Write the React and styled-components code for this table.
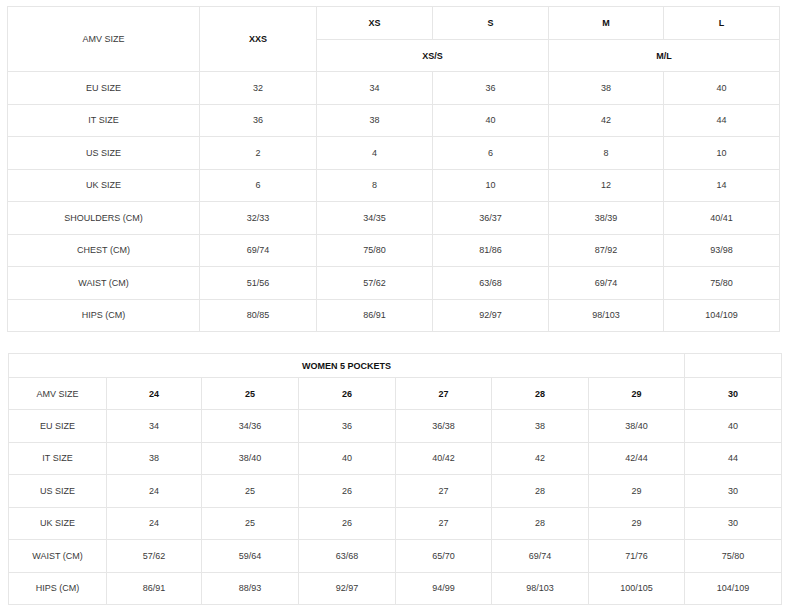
import React from 'react'
import styled, { createGlobalStyle } from 'styled-components'

const GlobalStyle = createGlobalStyle`
  html, body {
    margin: 0;
    padding: 0;
    background: #fff;
  }
  body {
    font-family: "Liberation Sans", Arial, sans-serif;
  }
`

const Page = styled.div`
  width: 800px;
  padding-top: 6px;
`

const Table = styled.table`
  border-collapse: collapse;
  table-layout: fixed;
  width: ${(p) => p.$width}px;
  margin-left: ${(p) => p.$left}px;
  margin-top: ${(p) => p.$top || 0}px;
  font-size: 9px;
`

const Row = styled.tr`
  height: ${(p) => p.$h || 32.5}px;
`

const Cell = styled.td`
  border: 1px solid #e6e6e6;
  text-align: center;
  vertical-align: middle;
  padding: 0;
  color: ${(p) => (p.$bold ? '#111' : '#3a3a3a')};
  font-weight: ${(p) => (p.$bold ? 700 : 400)};
  white-space: nowrap;
`

const first = {
  cols: [192, 117, 116, 116, 115, 116],
  rows: [
    ['EU SIZE', '32', '34', '36', '38', '40'],
    ['IT SIZE', '36', '38', '40', '42', '44'],
    ['US SIZE', '2', '4', '6', '8', '10'],
    ['UK SIZE', '6', '8', '10', '12', '14'],
    ['SHOULDERS (CM)', '32/33', '34/35', '36/37', '38/39', '40/41'],
    ['CHEST (CM)', '69/74', '75/80', '81/86', '87/92', '93/98'],
    ['WAIST (CM)', '51/56', '57/62', '63/68', '69/74', '75/80'],
    ['HIPS (CM)', '80/85', '86/91', '92/97', '98/103', '104/109'],
  ],
}

const second = {
  cols: [98, 95, 97, 97, 96, 97, 96, 97],
  head: ['24', '25', '26', '27', '28', '29', '30'],
  rows: [
    ['EU SIZE', '34', '34/36', '36', '36/38', '38', '38/40', '40'],
    ['IT SIZE', '38', '38/40', '40', '40/42', '42', '42/44', '44'],
    ['US SIZE', '24', '25', '26', '27', '28', '29', '30'],
    ['UK SIZE', '24', '25', '26', '27', '28', '29', '30'],
    ['WAIST (CM)', '57/62', '59/64', '63/68', '65/70', '69/74', '71/76', '75/80'],
    ['HIPS (CM)', '86/91', '88/93', '92/97', '94/99', '98/103', '100/105', '104/109'],
  ],
}

const Cols = ({ widths }) => (
  <colgroup>
    {widths.map((w, i) => (
      <col key={i} style={{ width: w }} />
    ))}
  </colgroup>
)

const DataRows = ({ rows }) =>
  rows.map((r) => (
    <Row key={r[0]}>
      {r.map((v, i) => (
        <Cell key={i}>{v}</Cell>
      ))}
    </Row>
  ))

const AmvTable = () => (
  <Table $width={772} $left={7}>
    <Cols widths={first.cols} />
    <tbody>
      <Row $h={33}>
        <Cell rowSpan={2}>AMV SIZE</Cell>
        <Cell rowSpan={2} $bold>XXS</Cell>
        <Cell $bold>XS</Cell>
        <Cell $bold>S</Cell>
        <Cell $bold>M</Cell>
        <Cell $bold>L</Cell>
      </Row>
      <Row $h={32}>
        <Cell colSpan={2} $bold>XS/S</Cell>
        <Cell colSpan={2} $bold>M/L</Cell>
      </Row>
      <DataRows rows={first.rows} />
    </tbody>
  </Table>
)

const PocketsTable = () => (
  <Table $width={773} $left={8} $top={21}>
    <Cols widths={second.cols} />
    <tbody>
      <Row $h={24}>
        <Cell colSpan={7} $bold>WOMEN 5 POCKETS</Cell>
        <Cell />
      </Row>
      <Row $h={32}>
        <Cell>AMV SIZE</Cell>
        {second.head.map((h) => (
          <Cell key={h} $bold>{h}</Cell>
        ))}
      </Row>
      <DataRows rows={second.rows} />
    </tbody>
  </Table>
)

export default function App() {
  return (
    <Page>
      <GlobalStyle />
      <AmvTable />
      <PocketsTable />
    </Page>
  )
}
